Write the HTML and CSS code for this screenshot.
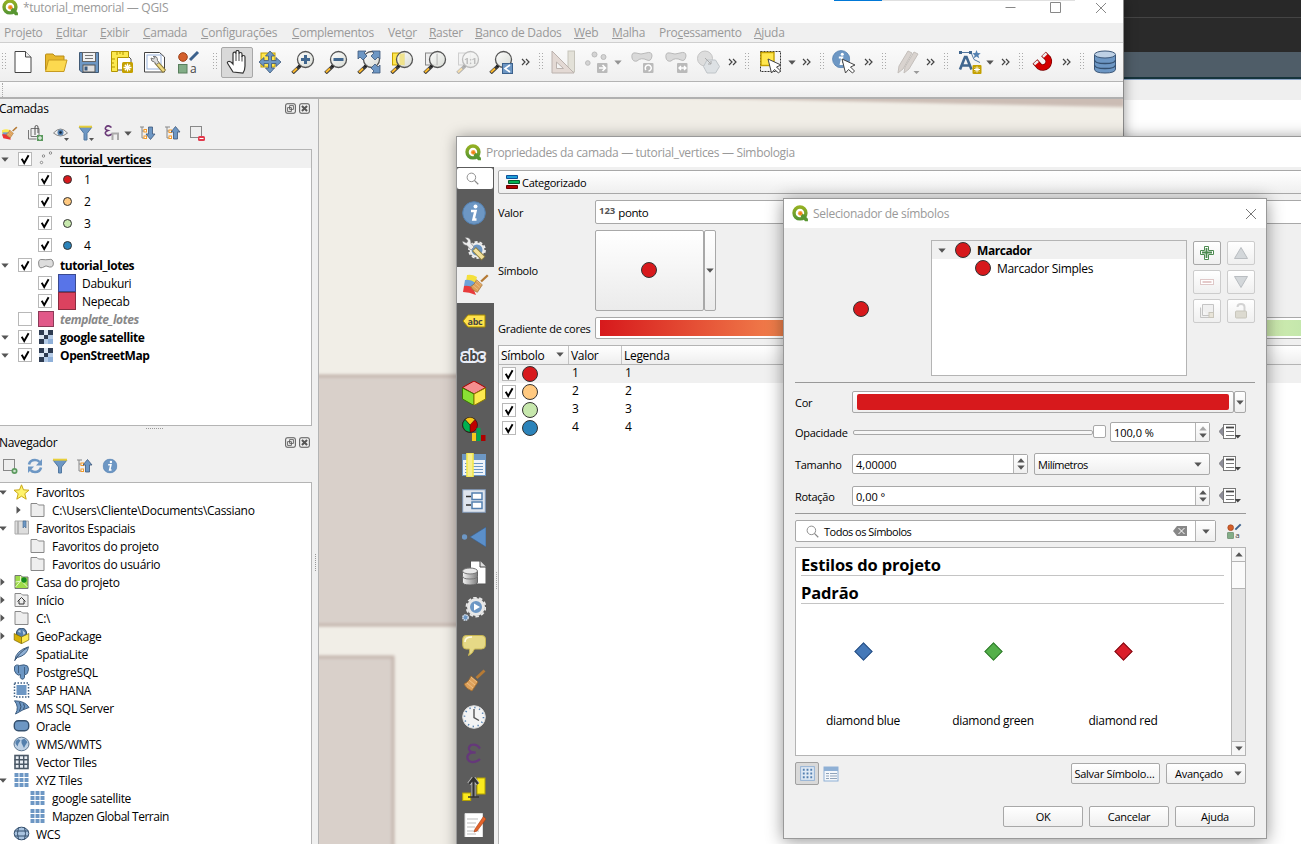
FILE: index.html
```html
<!DOCTYPE html>
<html lang="pt-BR">
<head>
<meta charset="utf-8">
<title>QGIS</title>
<link rel="stylesheet" href="styles.css">
</head>
<body>
<svg class="defs" width="0" height="0">
<defs>
<linearGradient id="gLogo" x1="0" y1="0" x2="0" y2="1"><stop offset="0" stop-color="#93b023"/><stop offset="1" stop-color="#589632"/></linearGradient>
<linearGradient id="gGlass" x1="0" y1="0" x2="1" y2="1"><stop offset="0" stop-color="#fff"/><stop offset="1" stop-color="#d3d7cf"/></linearGradient>
<linearGradient id="gCyl" x1="0" y1="0" x2="1" y2="0"><stop offset="0" stop-color="#f4f4f4"/><stop offset="1" stop-color="#7d7d7d"/></linearGradient>
<symbol id="logo" viewBox="0 0 16 16"><circle cx="7.5" cy="7.5" r="5.6" fill="none" stroke="url(#gLogo)" stroke-width="3.2"/><path d="M8 8l2.6 0.4L15 13v2.4h-2.6L8.4 11z" fill="#589632"/><circle cx="7.8" cy="7.8" r="2.2" fill="#f3a641"/><circle cx="8" cy="8" r="1.2" fill="#ee7913"/></symbol>
<symbol id="down" viewBox="0 0 8 5"><path d="M0.3 0.5h7.4L4 4.7z" fill="#555"/></symbol>
<symbol id="right" viewBox="0 0 5 8"><path d="M0.5 0.3v7.4L4.7 4z" fill="#555"/></symbol>
<symbol id="up" viewBox="0 0 8 5"><path d="M0.3 4.5h7.4L4 0.3z" fill="#555"/></symbol>
<symbol id="more" viewBox="0 0 9 8"><path d="M1 1l3 3-3 3M5 1l3 3-3 3" fill="none" stroke="#444" stroke-width="1.2"/></symbol>
<symbol id="glass" viewBox="0 0 24 24"><path d="M9 16L1.5 23" stroke="#3a3a3a" stroke-width="3.6"/><path d="M6 18.5L2 22.3" stroke="#fcb92c" stroke-width="2"/><circle cx="9" cy="15.5" r="1.6" fill="#111"/><circle cx="14.5" cy="9.5" r="8" fill="url(#gGlass)" fill-opacity=".85" stroke="#555" stroke-width="1.3"/></symbol>
<symbol id="new" viewBox="0 0 24 24"><path d="M4 1.5h10.500l5.500 5.500v15.500H4z" fill="#fff" stroke="#444"/><path d="M14.500 1.500V7H20" fill="#eee" stroke="#444"/></symbol>
<symbol id="open" viewBox="0 0 24 24"><path d="M1.500 20V5q0-1 1-1H9l2 2h9v4" fill="#e8b92c" stroke="#b98d19"/><path d="M1.500 21.500L4.500 10h18.500l-3 11.500z" fill="#fcd94f" stroke="#c79b20"/></symbol>
<symbol id="save" viewBox="0 0 24 24"><path d="M2.500 2.500h19v20H5l-2.500-2.500z" fill="#6d97c4" stroke="#415a75"/><rect x="5.500" y="2.500" width="13" height="9" fill="#f2f2f2" stroke="#666"/><path d="M8 5.500h8M8 8.500h8" stroke="#777"/><rect x="6" y="15" width="12" height="7" fill="#e0e0e0" stroke="#555"/><rect x="7.500" y="16.500" width="3" height="4" fill="#3a5a80"/></symbol>
<symbol id="layout" viewBox="0 0 24 24"><path d="M6 4h10l5 5v11H6z" fill="#fff" stroke="#555"/><path d="M1.500 1.500h17v6h-11v14h-6z" fill="#fce94f" stroke="#b39500"/><path d="M7 2v3M10 2v2M13 2v3M2 9h3M2 13h2M2 17h3" stroke="#b39500"/><rect x="12" y="12" width="11" height="11" rx="1.500" fill="#c4a000"/><path d="M17.500 13.500v8M13.500 17.500h8M14.800 14.800l5.400 5.400M20.200 14.800l-5.400 5.400" stroke="#fff" stroke-width="1.300"/></symbol>
<symbol id="manager" viewBox="0 0 24 24"><path d="M1.500 2.500h15l5 4.500v15h-20z" fill="#fff" stroke="#444"/><rect x="4" y="5" width="14" height="14" fill="none" stroke="#9ab3dc"/><path d="M13 12l8.500 9.500" stroke="#8b7b3c" stroke-width="4.500"/><path d="M14 13l7 8" stroke="#f2dc82" stroke-width="2.500"/><path d="M10 6.500q4.500-1 4.500 4l1.500 2-2.500 2-2-2.500q-3.500 0-3.500-4l2.500 1 1.500-1.500z" fill="#ddd" stroke="#777"/></symbol>
<symbol id="style" viewBox="0 0 24 24"><circle cx="7" cy="7" r="4.300" fill="#d45f2b" stroke="#9c421b"/><path d="M14 10l8-8" stroke="#3c618c" stroke-width="3"/><rect x="2.500" y="14.500" width="8.500" height="8.500" fill="#82ad87" stroke="#587e5c"/><text x="14" y="22.500" font-family="Open Sans" font-size="12" fill="#444">a</text></symbol>
<symbol id="hand" viewBox="0 0 24 24"><path d="M8 22L3 14q-1.500-2 .5-2.500T8 14V4q0-1.800 1.500-1.800T11 4V2q0-1.500 1.500-1.500T14 2v2q0-1.500 1.500-1.500T17 4v3q0-1.500 1.500-1.500T20 7v9q0 4-2 7z" fill="#fff" stroke="#333" stroke-width="1.200"/><path d="M11 4v7M14 4v7M17 6v5.500" stroke="#444"/></symbol>
<symbol id="pan" viewBox="0 0 24 24"><rect x="3" y="3" width="14" height="14" fill="#ffe64d" stroke="#c4a000"/><path d="M12 1l4.500 5h-3v4.500H18V7.500l5 4.500-5 4.500v-3h-4.500V18h3L12 23l-4.500-5h3v-4.500H6v3L1 12l5-4.500v3h4.500V6h-3z" fill="#6d97c4" stroke="#3c5778" stroke-width=".8"/></symbol>
<symbol id="corners" viewBox="0 0 24 24"><path d="M1 1h8L7 3l3 3-4 4-3-3-2 2zM23 1v8l-2-2-3 3-4-4 3-3-2-2zM23 23h-8l2-2-3-3 4-4 3 3 2-2z" fill="#6d97c4" stroke="#3c5778" stroke-width=".8"/></symbol>
<symbol id="blob" viewBox="0 0 24 24"><path d="M2 8q-1-6 4-5 5 2 10 0 6-2 6 3-1 6-5 4-6-3-10 1-4 1-5-3z" fill="#d9d9d9" stroke="#b9b9b9"/></symbol>
<symbol id="brush" viewBox="0 0 24 24"><path d="M22.500 1.500l-8 7.500" stroke="#b57a35" stroke-width="2.800"/><path d="M9 7l7 6-6 9q-6-2-8-7 5-2 7-8z" fill="#dda05a" stroke="#9a682c" stroke-width=".8"/><path d="M9 8l6 5M7 11l6 5M5 14l6 5" stroke="#f1c891" stroke-width=".8"/></symbol>
<symbol id="info" viewBox="0 0 24 24"><circle cx="12" cy="12" r="11.300" fill="#6d97c4" stroke="#5480b0"/><circle cx="13.500" cy="5.500" r="2" fill="#fff"/><path d="M9 10h4.500l-2 8.500h3" fill="none" stroke="#fff" stroke-width="2.600"/></symbol>
<symbol id="cursor" viewBox="0 0 24 24"><path d="M9 9l3.500 14 3-3.500 4 3.500 2-2-4-4 4.500-2z" fill="#fff" stroke="#444"/></symbol>
<symbol id="db" viewBox="0 0 24 24"><path d="M1.500 5v14q0 4 10.500 4t10.500-4V5" fill="#6d97c4" stroke="#3c5778"/><ellipse cx="12" cy="4.500" rx="10.500" ry="3.500" fill="#bed1e5" stroke="#3c5778"/><path d="M1.500 10q0 3.500 10.500 3.500T22.500 10M1.500 15q0 3.500 10.500 3.500T22.500 15" fill="none" stroke="#34506f" stroke-width="1.300"/></symbol>
<symbol id="check" viewBox="0 0 14 14"><rect x=".5" y=".5" width="13" height="13" fill="#fff" stroke="#b8b8b8"/><path d="M3.700 6.800L6.200 11 10.600 3.200" fill="none" stroke="#000" stroke-width="1.900"/></symbol>
<symbol id="uncheck" viewBox="0 0 14 14"><rect x=".5" y=".5" width="13" height="13" fill="#fff" stroke="#b8b8b8"/></symbol>
<symbol id="raster" viewBox="0 0 14 14"><rect width="14" height="14" fill="#b7cde8"/><path d="M0 0h5v5H0zM9 0h5v5H9zM5 5h4v4H5zM0 9h5v5H0z" fill="#2d3b52"/><path d="M5 0h4v5H5zM0 5h5v4H0z" fill="#dce7f4"/><path d="M9 9h5v5H9z" fill="#8fb0d9"/></symbol>
<symbol id="folder" viewBox="0 0 16 16"><path d="M1.500 14.500v-13h6l1.500 1.500h5.500v11.500z" fill="#eee" stroke="#888"/></symbol>
<symbol id="float" viewBox="0 0 12 12"><rect x=".7" y=".7" width="10.600" height="10.600" rx="2" fill="none" stroke="#555" stroke-width="1.100"/><path d="M5 2.800h4.200V7H5zM2.800 5H7v4.200H2.800z" fill="none" stroke="#555" stroke-width=".9"/></symbol>
<symbol id="close" viewBox="0 0 12 12"><rect x=".7" y=".7" width="10.600" height="10.600" rx="2" fill="none" stroke="#555" stroke-width="1.100"/><path d="M3.200 3.200l5.600 5.600M8.800 3.200L3.200 8.800" stroke="#555" stroke-width="2.200"/></symbol>
<symbol id="funnel" viewBox="0 0 16 16"><path d="M1 2h14L9.500 9v6h-3V9z" fill="#6d97c4" stroke="#5278a0"/><path d="M1 1.700h14" stroke="#e8cf3a" stroke-width="2"/></symbol>
<symbol id="expand" viewBox="0 0 16 16"><path d="M0 2h4M2 2v11H4M2 6h2" fill="none" stroke="#888"/><rect x="4" y="4.500" width="2.500" height="2.500" fill="#fff" stroke="#f39a28"/><rect x="4" y="11" width="2.500" height="2.500" fill="#fff" stroke="#f39a28"/><path d="M8.500 2h4v7H15l-4.500 5.500L6 9h2.500z" fill="#6d97c4" stroke="#3c5778" stroke-width=".8"/></symbol>
<symbol id="collapse" viewBox="0 0 16 16"><path d="M0 2h5M2 2v11H4M2 6h2" fill="none" stroke="#888"/><rect x="4" y="5" width="2.500" height="2.500" fill="#fff" stroke="#f39a28"/><rect x="4" y="11" width="2.500" height="2.500" fill="#fff" stroke="#f39a28"/><path d="M8.500 14h4V7H15l-4.500-5.500L6 7h2.500z" fill="#6d97c4" stroke="#3c5778" stroke-width=".8"/></symbol>
<symbol id="grid9" viewBox="0 0 16 16"><path d="M1 1h4v4H1zM6 1h4v4H6zM11 1h4v4h-4zM1 6h4v4H1zM6 6h4v4H6zM11 6h4v4h-4zM1 11h4v4H1zM6 11h4v4H6zM11 11h4v4h-4z" fill="#6d97c4"/></symbol>
<symbol id="globe" viewBox="0 0 16 16"><ellipse cx="8" cy="8" rx="7.500" ry="6.800" fill="#bed1e5" stroke="#5d7690"/><path d="M2 5l3-2 2 1.500-2 3-1 3-2-3zM8 4l3-1.500L14 6l-2 3-1.500 3L9 9l-1-2z" fill="#5580ad"/></symbol>
<symbol id="mag" viewBox="0 0 14 14"><circle cx="5.800" cy="5.800" r="4.600" fill="none" stroke="#888"/><path d="M9 9l4.200 4.200" stroke="#888" stroke-width="1.300"/></symbol>
<symbol id="ovr" viewBox="0 0 24 18"><path d="M5 3v11L0 8.500z" fill="#8d8d99" stroke="#666" stroke-width=".6"/><rect x="4.500" y="1.500" width="12" height="14" fill="#fff" stroke="#777"/><path d="M7 4.500h8" stroke="#444" stroke-width="1.800"/><path d="M7 8.500h8M7 12.500h8" stroke="#777"/><path d="M15.500 12h6.500l-3.200 3.500z" fill="#444"/></symbol>
<symbol id="x" viewBox="0 0 12 12"><path d="M1 1l10 10M11 1L1 11" stroke="#777" fill="none"/></symbol>
<symbol id="dots" viewBox="0 0 4 18"><path d="M.5 0v18M3.500 0v18" stroke="#aaa" stroke-dasharray="1 2"/></symbol>
</defs>
</svg>

<div class="screen">
  <div class="backdrop">
    <div class="bd-top"></div><div class="bd-dark"></div><div class="bd-slate"></div><div class="bd-line"></div><div class="bd-gray"></div>
  </div>

  <div class="win main">
    <div class="titlebar main-title"><svg class="logo"><use href="#logo"/></svg><span class="mt">*tutorial_memorial — QGIS</span>
      <svg class="winbtns" viewBox="0 0 110 14"><path d="M1.500 6.500h10M46.500 1.500h10v10h-10zM92 2l10 10M102 2L92 12" fill="none" stroke="#888"/></svg>
      <i class="progress"></i>
    </div>
    <div class="menubar"><span>Pro<u>j</u>eto</span><span><u>E</u>ditar</span><span><u>E</u>xibir</span><span><u>C</u>amada</span><span><u>C</u>onfigurações</span><span><u>C</u>omplementos</span><span>Vet<u>o</u>r</span><span><u>R</u>aster</span><span><u>B</u>anco de Dados</span><span><u>W</u>eb</span><span><u>M</u>alha</span><span>Pro<u>c</u>essamento</span><span><u>A</u>juda</span></div>
    <div class="toolbar">
      <svg class="h"><use href="#dots"/></svg>
      <svg class="i"><use href="#new"/></svg><svg class="i"><use href="#open"/></svg><svg class="i"><use href="#save"/></svg><svg class="i"><use href="#layout"/></svg><svg class="i"><use href="#manager"/></svg><svg class="i"><use href="#style"/></svg>
      <svg class="h off"><use href="#dots"/></svg>
      <b class="pressed"><svg class="i"><use href="#hand"/></svg></b>
      <svg class="i"><use href="#pan"/></svg>
      <svg class="i" viewBox="0 0 24 24"><use href="#glass"/><path d="M14.500 5v9M10 9.500h9" stroke="#41678f" stroke-width="3"/></svg>
      <svg class="i" viewBox="0 0 24 24"><use href="#glass"/><path d="M9.500 9.500h10" stroke="#41678f" stroke-width="3"/></svg>
      <svg class="i" viewBox="0 0 24 24"><use href="#glass"/><use href="#corners"/></svg>
      <svg class="i" viewBox="0 0 24 24"><rect x="2.500" y="3" width="12" height="12" fill="#ffe64d" stroke="#c4a000"/><use href="#glass"/><path d="M9.500 4v11h5V3.500z" fill="#f0e38c"/></svg>
      <svg class="i" viewBox="0 0 24 24"><rect x="2.500" y="3" width="12" height="12" fill="#eee" stroke="#888"/><use href="#glass"/><path d="M14 4v11" stroke="#bbb"/></svg>
      <svg class="i dim" viewBox="0 0 24 24"><rect x="2.500" y="3" width="12" height="12" fill="#eee" stroke="#888"/><use href="#glass"/><text x="8" y="13.500" font-family="Open Sans" font-weight="bold" font-size="9.500" fill="#555">1:1</text></svg>
      <svg class="i" viewBox="0 0 24 24"><use href="#glass"/><rect x="13.500" y="13.500" width="10" height="10" fill="#6d97c4" stroke="#3c618c"/><path d="M21 15l-5 3.500 5 3.500" fill="none" stroke="#fff" stroke-width="1.600"/></svg>
      <svg class="m"><use href="#more"/></svg><svg class="h"><use href="#dots"/></svg>
      <svg class="i" viewBox="0 0 24 24"><rect x="17" y="1" width="6.500" height="21" fill="#e3e1d8" stroke="#c5c3ba"/><path d="M1 1v22h22zM5.500 12v6.500h7z" fill="#e3d9d4" fill-rule="evenodd" stroke="#bbb2ae"/></svg>
      <svg class="i points" viewBox="0 0 24 24"><g fill="#d4d4d4" stroke="#bbb"><circle cx="2.800" cy="13" r="2.300"/><circle cx="9.500" cy="4.500" r="2.500"/><circle cx="18.500" cy="7" r="2.500"/></g><rect x="12" y="13" width="10.500" height="10" rx="1" fill="#bababa"/><path d="M14 18h6M17.500 15l3 3-3 3" stroke="#fff" stroke-width="1.600" fill="none"/></svg>
      <svg class="a dim2"><use href="#down"/></svg>
      <svg class="i" viewBox="0 0 24 24"><use href="#blob"/><rect x="13" y="13" width="10.500" height="10" rx="1" fill="#bababa"/><path d="M16 20a3 3 0 1 1 2.500 1" stroke="#fff" stroke-width="1.500" fill="none"/></svg>
      <svg class="i" viewBox="0 0 24 24"><use href="#blob"/><rect x="13" y="13" width="10.500" height="10" rx="1" fill="#bababa"/><path d="M15 18h7M17 16l-2 2 2 2M20 16l2 2-2 2" stroke="#fff" stroke-width="1.400" fill="none"/></svg>
      <svg class="i" viewBox="0 0 24 24"><circle cx="9" cy="8.500" r="7.500" fill="#ddd" stroke="#c4c4c4"/><path d="M11 10h8.500l4 6.500-4 6.500H11l-3.500-6.500z" fill="#dde1e4" stroke="#bfc4c8"/><path d="M9 8l6 6v-3M15 14h-3" stroke="#aaa" fill="none"/></svg>
      <svg class="m"><use href="#more"/></svg><svg class="h"><use href="#dots"/></svg>
      <svg class="i" viewBox="0 0 24 24"><rect x="1.500" y="1.500" width="20" height="20" fill="none" stroke="#333" stroke-dasharray="2 1"/><rect x="2" y="2.500" width="13" height="13" fill="#ffe64d" stroke="#c4a000" stroke-width="1.400"/><use href="#cursor"/></svg>
      <svg class="a"><use href="#down"/></svg><svg class="m"><use href="#more"/></svg><svg class="h"><use href="#dots"/></svg>
      <svg class="i" viewBox="0 0 24 24"><g transform="scale(.76)"><use href="#info" width="24" height="24"/></g><use href="#cursor" x="1"/></svg>
      <svg class="m"><use href="#more"/></svg><svg class="h"><use href="#dots"/></svg>
      <svg class="i" viewBox="0 0 24 24"><path d="M2 23l1-7 9-15 4 2-9 16zM8 23l1-6 9-15 4 2-9 15z" fill="#d9d3cf" stroke="#c4bfbb"/><path d="M17.500 21h6L20.500 24z" fill="#999"/></svg>
      <svg class="m"><use href="#more"/></svg><svg class="h"><use href="#dots"/></svg>
      <svg class="i" viewBox="0 0 24 24"><path d="M2 2.500h11l3 7 6 3" fill="none" stroke="#5478a0"/><path d="M1 1h3v3H1zM11 1h3v3h-3z" fill="#41678f"/><path d="M2 19.500L7 7h1.500l5 12.500M4.500 15.500h7" fill="none" stroke="#41678f" stroke-width="2.600"/><path d="M18.500 0l1.200 3 3 .2-2.300 2 .8 3-2.700-1.700L15.800 8.200l.8-3-2.300-2 3-.2z" fill="#5480b0"/><rect x="14.500" y="15" width="9" height="9" rx="1" fill="#c4a000"/><path d="M19 16.500v6M16 19.500h6M17 17.500l4 4M21 17.500l-4 4" stroke="#fff"/></svg>
      <svg class="a"><use href="#down"/></svg><svg class="m"><use href="#more"/></svg><svg class="h"><use href="#dots"/></svg>
      <svg class="i" viewBox="0 0 24 24"><path d="M4 11.500L8.500 16.500A6 6 0 0 0 17 8.500L12.500 4" fill="none" stroke="#7c0000" stroke-width="6.600"/><path d="M4.500 12L8.500 16.500A6 6 0 0 0 17 8.500L13 4.500" fill="none" stroke="#d40000" stroke-width="5.200"/><path d="M4.300 11.800l1.700 1.900M12.800 4.300l1.800 1.800" stroke="#eee" stroke-width="5"/></svg>
      <svg class="m"><use href="#more"/></svg><svg class="h"><use href="#dots"/></svg>
      <svg class="i"><use href="#db"/></svg>
    </div>
    <div class="toolbar2"></div>
    <div class="body">
      <div class="dock">
        <div class="dock-title"><span>Camadas</span><svg><use href="#float"/></svg><svg><use href="#close"/></svg></div>
        <div class="dock-tools first">
          <svg viewBox="0 0 24 24"><path d="M0 8q6-3 12 0v5H0z" fill="#fce94f"/><path d="M1 11h12v5H1z" fill="#729fcf"/><path d="M0 14q6-1 12 2l1 6-11-2z" fill="#e33"/><use href="#brush" x="4" y="2" width="20" height="19"/></svg>
          <svg viewBox="0 0 16 16"><path d="M1.500 5v9h8M4 3.500v8h8v-8z" fill="none" stroke="#777"/><path d="M8 10V2q0-1.500 1.500-1.500T11 2v6" fill="none" stroke="#555"/><rect x="10" y="10" width="6" height="6" fill="#5b9a5e"/><path d="M13 11v4M11 13h4" stroke="#fff"/></svg>
          <svg viewBox="0 0 16 16"><path d="M.5 8q7-8 14 0-7 6-14 0z" fill="#eee" stroke="#888"/><circle cx="7.500" cy="7.500" r="3" fill="#5480b0"/><circle cx="7.500" cy="7.500" r="1.300" fill="#123"/><path d="M11 13h5l-2.500 3z" fill="#555"/></svg>
          <svg viewBox="0 0 16 16"><path d="M1 2h13L9 8.500V15H6V8.500z" fill="#6d97c4" stroke="#5278a0"/><path d="M1 1.700h13" stroke="#e8cf3a" stroke-width="2"/><path d="M11 13h5l-2.500 3z" fill="#555"/></svg>
          <svg viewBox="0 0 16 16"><path d="M7.500 2.500Q4-.5 2 2t2 3.500Q0 7 2 9.500T8 9" fill="none" stroke="#6a3a78" stroke-width="1.600"/><path d="M8.500 15V8.500h5.500V15" fill="none" stroke="#aaa" stroke-width="2"/></svg>
          <svg class="sm"><use href="#down"/></svg>
          <svg><use href="#expand"/></svg><svg><use href="#collapse"/></svg>
          <svg viewBox="0 0 16 16"><rect x="1.500" y="1.500" width="11" height="11" fill="#eee" stroke="#888"/><rect x="9" y="11" width="7" height="5" rx="1.500" fill="#e2394c"/><path d="M10.500 13.500h4" stroke="#fff"/></svg>
        </div>
        <div class="tree layers">
          <div class="row sel"><svg class="ar"><use href="#down"/></svg><svg class="ck"><use href="#check"/></svg><svg class="ty" viewBox="0 0 16 16"><g fill="#fff" stroke="#888"><circle cx="3.500" cy="11.500" r="1.200"/><circle cx="5.500" cy="5" r="1.200"/><circle cx="12.500" cy="2" r="1.200"/></g></svg><span class="b un">tutorial_vertices</span></div>
          <div class="row cat"><svg class="ck"><use href="#check"/></svg><i class="dot red"></i><span>1</span></div>
          <div class="row cat"><svg class="ck"><use href="#check"/></svg><i class="dot org"></i><span>2</span></div>
          <div class="row cat"><svg class="ck"><use href="#check"/></svg><i class="dot grn"></i><span>3</span></div>
          <div class="row cat"><svg class="ck"><use href="#check"/></svg><i class="dot blu"></i><span>4</span></div>
          <div class="row"><svg class="ar"><use href="#down"/></svg><svg class="ck"><use href="#check"/></svg><svg class="ty" viewBox="0 0 16 16"><path d="M.7 7Q0 2 4 2.500t7 0q4-1 4.300 3.500T11.500 10Q8 7.500 4.500 10.500 1 12 .7 7z" fill="#ddd" stroke="#888"/></svg><span class="b">tutorial_lotes</span></div>
          <div class="row sub"><svg class="ck"><use href="#check"/></svg><i class="sw s1"></i><span>Dabukuri</span></div>
          <div class="row sub"><svg class="ck"><use href="#check"/></svg><i class="sw s2"></i><span>Nepecab</span></div>
          <div class="row"><svg class="ar"></svg><svg class="ck"><use href="#uncheck"/></svg><i class="sw s3"></i><span class="b it">template_lotes</span></div>
          <div class="row"><svg class="ar"><use href="#down"/></svg><svg class="ck"><use href="#check"/></svg><svg class="ty ra"><use href="#raster"/></svg><span class="b">google satellite</span></div>
          <div class="row"><svg class="ar"><use href="#down"/></svg><svg class="ck"><use href="#check"/></svg><svg class="ty ra"><use href="#raster"/></svg><span class="b">OpenStreetMap</span></div>
        </div>
        <div class="split"></div>
        <div class="dock-title nav"><span>Navegador</span><svg><use href="#float"/></svg><svg><use href="#close"/></svg></div>
        <div class="dock-tools second">
          <svg viewBox="0 0 16 16"><rect x="1.500" y="1.500" width="11" height="11" fill="#eee" stroke="#888"/><circle cx="12.500" cy="13" r="3" fill="#5b9a5e"/><circle cx="12.500" cy="13" r="1.300" fill="#cfe3cf"/></svg>
          <svg viewBox="0 0 16 16"><path d="M2 6.500Q3 2 8 2q3 0 4.500 2" fill="none" stroke="#6d97c4" stroke-width="2.600"/><path d="M15 1v6.500H9z" fill="#6d97c4"/><path d="M14 9.500Q13 14 8 14q-3 0-4.500-2" fill="none" stroke="#6d97c4" stroke-width="2.600"/><path d="M1 15V8.500h6z" fill="#6d97c4"/></svg>
          <svg><use href="#funnel"/></svg><svg><use href="#collapse"/></svg><svg viewBox="-1 -1 26 26"><use href="#info" width="24" height="24"/></svg>
        </div>
        <div class="tree browser">
          <div class="nrow"><svg class="ar"><use href="#down"/></svg><svg class="ic" viewBox="0 0 16 16"><path d="M8 .8l2 5 5.500.4-4.200 3.500 1.400 5.500L8 12.200l-4.700 3 1.400-5.500L.5 6.200 6 5.800z" fill="#fff36b" stroke="#c9a818"/></svg><span>Favoritos</span></div>
          <div class="nrow in"><svg class="ar rt"><use href="#right"/></svg><svg class="ic"><use href="#folder"/></svg><span>C:\Users\Cliente\Documents\Cassiano</span></div>
          <div class="nrow"><svg class="ar"><use href="#down"/></svg><svg class="ic" viewBox="0 0 16 16"><path d="M1.500 1h3v13h-3zM4.500 1H15v13H4.500z" fill="#ddd" stroke="#aaa"/><path d="M9.500 1h3v7L11 6.500 9.500 8z" fill="#6d97c4" stroke="#41678f" stroke-width=".6"/></svg><span>Favoritos Espaciais</span></div>
          <div class="nrow in"><svg class="ar"></svg><svg class="ic"><use href="#folder"/></svg><span>Favoritos do projeto</span></div>
          <div class="nrow in"><svg class="ar"></svg><svg class="ic"><use href="#folder"/></svg><span>Favoritos do usuário</span></div>
          <div class="nrow"><svg class="ar rt"><use href="#right"/></svg><svg class="ic" viewBox="0 0 16 16"><path d="M1.500 14.500v-13h6L9 3h5.500v11.500z" fill="#9fdc4a" stroke="#777"/><path d="M2 8l6-1 6 6M2 13l5-6V2" stroke="#e6f7c8" fill="none"/><circle cx="10.500" cy="6" r="2.700" fill="#158a1f"/></svg><span>Casa do projeto</span></div>
          <div class="nrow"><svg class="ar rt"><use href="#right"/></svg><svg class="ic" viewBox="0 0 16 16"><use href="#folder"/><path d="M4 9.500L8 5.500 12 9.500M5.500 8.500V12h5V8.500" fill="none" stroke="#333"/></svg><span>Início</span></div>
          <div class="nrow"><svg class="ar rt"><use href="#right"/></svg><svg class="ic"><use href="#folder"/></svg><span>C:\</span></div>
          <div class="nrow"><svg class="ar rt"><use href="#right"/></svg><svg class="ic" viewBox="0 0 16 16"><circle cx="8" cy="5" r="5" fill="#5580ad" stroke="#2c4560"/><path d="M4 3l3-1v3zM9 2l3 3-2 2z" fill="#bed1e5"/><path d="M.7 5.500L8 9v6.700L.7 12z" fill="#d6b106" stroke="#7d6700" stroke-width=".7"/><path d="M15.300 5.500L8 9v6.700l7.300-3.700z" fill="#fce94f" stroke="#7d6700" stroke-width=".7"/></svg><span>GeoPackage</span></div>
          <div class="nrow"><svg class="ar"></svg><svg class="ic" viewBox="0 0 16 16"><path d="M1.500 14Q2 5 15 .8 14 9 4 11.500z" fill="#8fb0d5" stroke="#3f5f82"/><path d="M1 15Q5 7 14 1.500" fill="none" stroke="#35506e"/></svg><span>SpatiaLite</span></div>
          <div class="nrow"><svg class="ar"></svg><svg class="ic" viewBox="0 0 16 16"><path d="M1 3q1-3 5-1.500Q11 0 14 2q2 3 0 7-1 2-3 1.500v3Q10 16 8 15t-1-4.500Q5 12 3 10 0 7 1 3z" fill="#6d97c4" stroke="#3f5f82"/><path d="M5 2v7M11 3v7" stroke="#3f5f82" fill="none"/></svg><span>PostgreSQL</span></div>
          <div class="nrow"><svg class="ar"></svg><svg class="ic" viewBox="0 0 16 16"><rect x="1" y="1" width="14" height="14" fill="none" stroke="#3f5f82" stroke-width="1.500" stroke-dasharray="1.500 1.500"/><rect x="3" y="3" width="10" height="10" fill="#6d97c4"/></svg><span>SAP HANA</span></div>
          <div class="nrow"><svg class="ar"></svg><svg class="ic" viewBox="0 0 16 16"><path d="M1 .8Q12 1 15.500 7.500 10 9 2 14 6 7 1 .8z" fill="#6d97c4" stroke="#3f5f82"/><path d="M6 2q3 5 0 9M10 3.500q2 3 0 6" fill="none" stroke="#35506e"/></svg><span>MS SQL Server</span></div>
          <div class="nrow"><svg class="ar"></svg><svg class="ic" viewBox="0 0 16 16"><rect x=".8" y="2.800" width="14.400" height="10" rx="4" fill="#6d97c4" stroke="#35506e" stroke-width="1.400"/></svg><span>Oracle</span></div>
          <div class="nrow"><svg class="ar"></svg><svg class="ic"><use href="#globe"/></svg><span>WMS/WMTS</span></div>
          <div class="nrow"><svg class="ar"></svg><svg class="ic" viewBox="0 0 16 16"><rect x="1.500" y="1.500" width="13" height="13" fill="#e8edf3" stroke="#4a5866" stroke-width="1.600"/><path d="M5.800 1v14M10.200 1v14M1 5.800h14M1 10.200h14" stroke="#4a5866" stroke-width="1.400"/></svg><span>Vector Tiles</span></div>
          <div class="nrow"><svg class="ar"><use href="#down"/></svg><svg class="ic"><use href="#grid9"/></svg><span>XYZ Tiles</span></div>
          <div class="nrow in"><svg class="ar"></svg><svg class="ic"><use href="#grid9"/></svg><span>google satellite</span></div>
          <div class="nrow in"><svg class="ar"></svg><svg class="ic"><use href="#grid9"/></svg><span class="tight">Mapzen Global Terrain</span></div>
          <div class="nrow"><svg class="ar"></svg><svg class="ic" viewBox="0 0 16 16"><ellipse cx="8" cy="7.500" rx="7.300" ry="6.300" fill="#a9c3df" stroke="#35506e"/><path d="M1 5h14M1 10h14M5 1.500q-2 6 0 12M11 1.500q2 6 0 12" fill="none" stroke="#35506e"/></svg><span>WCS</span></div>
        </div>
        <i class="vdots"></i>
      </div>
      <svg class="map" width="804" height="745" viewBox="0 0 804 745">
        <defs><filter id="soft" x="-10%" y="-10%" width="120%" height="120%"><feGaussianBlur stdDeviation="1.500"/></filter></defs>
        <rect width="804" height="745" fill="#f1eee7"/>
        <g filter="url(#soft)" fill="#d9d0ca" stroke="#c3b4ac" stroke-width="3"><path d="M-10 277H300V526H-10zM-10 558H74V800H-10z"/></g>
        <path d="M250-4H805V8Q560 3 250-4z" fill="#cbbcb4" filter="url(#soft)"/>
      </svg>
    </div>
  </div>

  <div class="win props">
    <div class="titlebar dlg"><svg class="logo"><use href="#logo"/></svg><span class="pt">Propriedades da camada — tutorial_vertices — Simbologia</span></div>
    <div class="props-body">
      <div class="side">
        <div class="find"><svg><use href="#mag"/></svg></div>
        <div class="tab"><svg><use href="#info"/></svg></div>
        <div class="tab"><svg viewBox="0 0 24 24"><circle cx="15" cy="13" r="6.500" fill="#6d97c4" stroke="#eee" stroke-width="2"/><circle cx="15" cy="13" r="8" fill="none" stroke="#eee" stroke-width="1.800" stroke-dasharray="3 2"/><path d="M3 .5q6-1 6 6l3 3.500-3 3-4-4.500Q.5 8 .5 4l4 2L6 4z" fill="#eee" stroke="#777" stroke-width=".6"/><path d="M12 12l9.500 9.500" stroke="#8b7b3c" stroke-width="5.500"/><path d="M12.500 12.500l8.500 8.500" stroke="#f2e09a" stroke-width="3.800"/></svg></div>
        <div class="tab on"><svg class="big" viewBox="0 0 26 26"><path d="M4 3q5-1 10 2l-2 7-9-2z" fill="#f4e03c"/><path d="M2 8q5-1 11 3l-3 6-9-3z" fill="#6da3d9"/><path d="M1 14q5-1 9 2l3 7q-7-3-13-3z" fill="#e83b3b"/><use href="#brush" x="6" y="1" width="20" height="22"/></svg></div>
        <div class="tab"><svg viewBox="0 0 24 24"><path d="M1 12l5-6h17v12H6z" fill="#ffe34d" stroke="#a68a00"/><text x="5.500" y="15.500" font-family="Open Sans" font-weight="bold" font-size="9" fill="#444">abc</text></svg></div>
        <div class="tab"><svg class="wide" viewBox="0 0 28 24"><text x="1.500" y="16" font-family="Open Sans" font-weight="bold" font-size="13.500" fill="#444" stroke="#e9edf7" stroke-width="4" stroke-linejoin="round" paint-order="stroke">abc</text></svg></div>
        <div class="tab"><svg viewBox="0 0 24 24"><path d="M12 0l11.500 6.500L12 13 .5 6.500z" fill="#f58f8f" stroke="#a00" /><path d="M.5 7v11L12 24.500V13z" fill="#8ae234" stroke="#3a7a00"/><path d="M23.500 7v11L12 24.500V13z" fill="#fce94f" stroke="#8a7a00"/></svg></div>
        <div class="tab"><svg viewBox="0 0 24 24"><circle cx="8" cy="8" r="7.500" fill="#c00000" stroke="#111" stroke-width=".6"/><path d="M8 8L3 2.500Q8-2 13 2.500z" fill="#f8c81c" stroke="#111" stroke-width=".5"/><path d="M8 8L3 2.500Q-2 8 3.500 13.800L8 15.500z" fill="#00b050" stroke="#111" stroke-width=".5"/><path d="M10 16h4v8h-4z" fill="#f8c81c"/><path d="M14.500 11h4v13h-4z" fill="#00a651"/><path d="M19 18h4.500v6H19z" fill="#b00000"/></svg></div>
        <div class="tab"><svg viewBox="0 0 24 24"><rect x=".5" y="1.500" width="23" height="21" fill="#eef3fa" stroke="#6d97c4"/><path d="M1 2h22v5H1z" fill="#6d97c4"/><path d="M3 10.500h18M3 13.500h18M3 16.500h18M3 19.500h18" stroke="#6d97c4"/><rect x="5" y="0" width="6" height="24" fill="#f7ef90" stroke="#f4e84e" stroke-width="1.600"/></svg></div>
        <div class="tab"><svg viewBox="0 0 24 24"><rect x=".7" y=".7" width="22.600" height="22.600" fill="#dfe5ee" stroke="#7d94b3"/><path d="M4 7.500h5M4 16h5" stroke="#333" stroke-width="1.500"/><rect x="10" y="4" width="10" height="6.500" fill="#fff" stroke="#5480b0" stroke-width="1.500"/><rect x="10" y="13" width="10" height="6.500" fill="#fff" stroke="#5480b0" stroke-width="1.500"/></svg></div>
        <div class="tab"><svg viewBox="0 0 24 24"><path d="M24 2v20L8 12z" fill="#5b8fc9" stroke="#35608f" stroke-width=".6"/><circle cx="2.500" cy="12" r="2.700" fill="#6d97c4"/></svg></div>
        <div class="tab"><svg viewBox="0 0 24 24"><path d="M8.500 0h10l5.500 5.500V23H8.500z" fill="#fff" stroke="#555"/><path d="M18 0v6h6" fill="#ddd" stroke="#444"/><path d="M.5 10v11q0 3 7.500 3t7.500-3V10" fill="url(#gCyl)" stroke="#666"/><ellipse cx="8" cy="10" rx="7.500" ry="3" fill="#e8e8e8" stroke="#777"/><path d="M.5 15q0 3 7.500 3t7.500-3" fill="none" stroke="#777"/></svg></div>
        <div class="tab"><svg viewBox="0 0 24 24"><circle cx="14" cy="10" r="7.500" fill="#6d97c4" stroke="#e8e8e8" stroke-width="3"/><circle cx="14" cy="10" r="9.500" fill="none" stroke="#e8e8e8" stroke-width="1.800" stroke-dasharray="3.500 2.460"/><path d="M12 6.500v7l6-3.500z" fill="#fff"/><circle cx="3.500" cy="20.500" r="2.700" fill="#6d97c4" stroke="#cfd9e6" stroke-width="1.600" stroke-dasharray="1.600 .6"/></svg></div>
        <div class="tab"><svg viewBox="0 0 24 24"><path d="M4 2.500h16q3.500 0 3.500 3.500v6q0 4-4 4h-7q-2 5-6 6.500 1.500-3 1-6.500H4Q.7 16 .7 12V6Q.7 2.500 4 2.500z" fill="#e6d986" stroke="#c7b552"/><path d="M3 9q0-5 7-5" stroke="#fffbe0" stroke-width="1.600" fill="none"/></svg></div>
        <div class="tab"><svg><use href="#brush"/></svg></div>
        <div class="tab"><svg viewBox="0 0 24 24"><circle cx="12" cy="12" r="11.300" fill="#f4f4f4" stroke="#ddd"/><circle cx="12" cy="12" r="9.500" fill="none" stroke="#5480b0" stroke-width="1.600" stroke-dasharray="1.300 3.670"/><path d="M12 4v8.500l5 3" fill="none" stroke="#555" stroke-width="1.400"/></svg></div>
        <div class="tab"><svg viewBox="0 0 24 24"><path d="M18 7.500Q14.500 2.500 9 4 5 7 8.500 10.500q2 1.500 5 1-6-.5-8 3.500-1 4.500 4 6 5 .5 8.500-3" fill="none" stroke="#65387a" stroke-width="2.300"/></svg></div>
        <div class="tab"><svg viewBox="0 0 24 24"><rect x="15" y="1" width="8" height="16" fill="#fbe91e" stroke="#b3a100"/><rect x=".7" y="16" width="8" height="7.500" fill="#fbe91e" stroke="#b3a100"/><path d="M11.500 20V2M7 7l4.500-6L16 7" fill="none" stroke="#bbb" stroke-width="4"/><path d="M11.500 20V2M7 7l4.500-6L16 7" fill="none" stroke="#333" stroke-width="2.300"/><path d="M6 20h11" stroke="#333" stroke-width="1.500"/></svg></div>
        <div class="tab"><svg viewBox="0 0 24 24"><path d="M3 .5h17.500v24H3z" fill="#fff" stroke="#ddd"/><path d="M5 6h11M5 10h9M5 14h8M5 18h12M5 21h9" stroke="#bbb"/><path d="M13 16l-1 3 3-1 9-12-2.500-2.500z" fill="#e4632a" stroke="#a33c10" stroke-width=".6"/></svg></div>
      </div>
      <div class="panel">
        <div class="combo catg"><svg viewBox="0 0 14 14"><path d="M.5.500h11v3H.500z" fill="#1fa0d8" stroke="#0d4f9a"/><path d="M2.500 5.500h11v3h-11z" fill="#00b050" stroke="#04552a"/><path d="M.5 10.500h11v3H.500z" fill="#b00000" stroke="#600"/></svg><span class="t">Categorizado</span></div>
        <div class="frow valor"><span class="t lab">Valor</span><div class="field"><b class="num">123</b><span class="t2">ponto</span></div></div>
        <div class="frow simb"><span class="t lab">Símbolo</span><div class="symbtn"><i class="mk"></i></div><div class="symarr"><svg><use href="#down"/></svg></div></div>
        <div class="frow grad"><span class="t lab">Gradiente de cores</span><div class="field"><i class="ramp"></i></div></div>
        <div class="table">
          <div class="th"><span>Símbolo</span><svg><use href="#down"/></svg><span class="c2">Valor</span><span class="c3">Legenda</span></div>
          <div class="tr sel"><svg class="ck"><use href="#check"/></svg><i class="mk"></i><span class="n1">1</span><span>1</span></div>
          <div class="tr"><svg class="ck"><use href="#check"/></svg><i class="mk org"></i><span class="n1">2</span><span>2</span></div>
          <div class="tr"><svg class="ck"><use href="#check"/></svg><i class="mk grn"></i><span class="n1">3</span><span>3</span></div>
          <div class="tr"><svg class="ck"><use href="#check"/></svg><i class="mk blu"></i><span class="n1">4</span><span>4</span></div>
        </div>
        <i class="vdots2"></i>
      </div>
    </div>
  </div>

  <div class="win picker">
    <div class="titlebar dlg"><svg class="logo"><use href="#logo"/></svg><span class="st">Selecionador de símbolos</span><svg class="x"><use href="#x"/></svg></div>
    <div class="pk">
      <div class="top">
        <div class="preview"><i class="mk"></i></div>
        <div class="stree"><div class="srow sel"><svg><use href="#down"/></svg><i class="mk"></i><span class="b">Marcador</span></div><div class="srow s2r"><i class="mk"></i><span>Marcador Simples</span></div></div>
        <div class="btns">
          <div class="bt"><svg viewBox="0 0 16 16"><path d="M5.500 1.500h4v4h5v4h-5v5h-4v-5h-4v-4h4z" fill="#fff" stroke="#4c8a50"/><path d="M7.500 3v10M3 7.500h10" stroke="#4c8a50" stroke-width="1.800"/></svg></div>
          <div class="bt off"><svg viewBox="0 0 16 16"><path d="M8 2.500l6.500 11h-13z" fill="#d3d7da" stroke="#b9bdc1"/></svg></div>
          <div class="bt off"><svg viewBox="0 0 16 16"><rect x="1.500" y="5.500" width="13" height="5" fill="#fff" stroke="#dfc8c8"/><path d="M3.500 8h9" stroke="#dcb9b9" stroke-width="1.500"/></svg></div>
          <div class="bt off"><svg viewBox="0 0 16 16"><path d="M8 13.500l6.500-11h-13z" fill="#d3d7da" stroke="#b9bdc1"/></svg></div>
          <div class="bt off"><svg viewBox="0 0 16 16"><path d="M1.500 4.500v10h9M3.500 1.500h11v11h-11z" fill="#f0f0f0" stroke="#c4c4c4"/><rect x="10" y="9.500" width="4.500" height="5" fill="#e8e4d8" stroke="#c9c6bb"/></svg></div>
          <div class="bt off"><svg viewBox="0 0 16 16"><path d="M4.500 4q0-3 3.500-3t3.500 3v4" fill="none" stroke="#d3d3d3" stroke-width="2"/><rect x="2.500" y="8" width="11" height="7" rx="1" fill="#dcdad0" stroke="#c8c6bc"/></svg></div>
        </div>
      </div>
      <div class="sep long"></div>
      <div class="r cor"><span class="t lb">Cor</span><div class="box c1"><i></i></div><div class="box ca"><svg><use href="#down"/></svg></div></div>
      <div class="r opa"><span class="t lb">Opacidade</span><div class="slider"><i class="track"></i><i class="knob"></i></div><div class="spin w1"><span class="t n">100,0 %</span><div class="ud dis"><svg><use href="#up"/></svg><svg><use href="#down"/></svg></div></div><svg class="ovr"><use href="#ovr"/></svg></div>
      <div class="r tam"><span class="t lb">Tamanho</span><div class="spin w2"><span class="t n">4,00000</span><div class="ud"><svg><use href="#up"/></svg><svg><use href="#down"/></svg></div></div><div class="combo mm"><span class="t mmt">Milímetros</span><svg><use href="#down"/></svg></div><svg class="ovr"><use href="#ovr"/></svg></div>
      <div class="r rot"><span class="t lb">Rotação</span><div class="spin w3"><span class="t n">0,00 °</span><div class="ud"><svg><use href="#up"/></svg><svg><use href="#down"/></svg></div></div><svg class="ovr"><use href="#ovr"/></svg></div>
      <div class="sep"></div>
      <div class="r sch"><div class="searchbox"><svg class="mg"><use href="#mag"/></svg><span class="t mmt">Todos os Símbolos</span><svg class="clr" viewBox="0 0 14 10"><path d="M4 0h10v10H4L0 5z" fill="#888"/><path d="M5.500 2l6 6M11.500 2l-6 6" stroke="#fff"/></svg><div class="dd"><svg><use href="#down"/></svg></div></div><svg class="sty"><use href="#style"/></svg></div>
      <div class="gallery">
        <div class="items">
          <h2>Estilos do projeto</h2><h2>Padrão</h2>
          <div class="cells"><div><i class="dm d1"></i><span>diamond blue</span></div><div><i class="dm d2"></i><span>diamond green</span></div><div><i class="dm d3"></i><span>diamond red</span></div></div>
        </div>
        <div class="scroll"><b><svg><use href="#up"/></svg></b><i></i><b class="bot"><svg><use href="#down"/></svg></b></div>
      </div>
      <div class="r foot"><div class="vb"><svg viewBox="0 0 16 16"><rect x=".7" y=".7" width="14.600" height="14.600" fill="#dfe9f4" stroke="#8fb0d5"/><path d="M3 3h2v2H3zM7 3h2v2H7zM11 3h2v2h-2zM3 7h2v2H3zM7 7h2v2H7zM11 7h2v2h-2zM3 11h2v2H3zM7 11h2v2H7zM11 11h2v2h-2z" fill="#5480b0"/></svg></div><svg class="lv" viewBox="0 0 16 16"><rect x="1" y="1" width="14" height="14" fill="#f4f7fb" stroke="#8fb0d5"/><path d="M1 1h14v4H1z" fill="#8fb0d5"/><path d="M3 7.500h3M7 7.500h7M3 10h3M7 10h7M3 12.500h3M7 12.500h7" stroke="#8fa3ba"/></svg><div class="pb sv"><span class="t">Salvar Símbolo…</span></div><div class="pb av"><span class="t">Avançado</span><svg><use href="#down"/></svg></div></div>
      <div class="r ok"><div class="pb"><span class="t">OK</span></div><div class="pb"><span class="t">Cancelar</span></div><div class="pb"><span class="t">Ajuda</span></div></div>
    </div>
  </div>
</div>
</body>
</html>
```
FILE: styles.css
```css
* { box-sizing: border-box; }
body { margin: 0; font-family: "Open Sans", "Noto Sans", sans-serif; font-size: 12px; letter-spacing: -0.3px; color: #000; }
.defs { position: absolute; }
svg { display: block; flex: none; }
i, b { flex: none; display: block; }
span { white-space: pre; }
.screen { position: relative; width: 1301px; height: 844px; overflow: hidden; background: #fff; }
.backdrop { margin-left: 1124px; }
.bd-top { height: 18px; background: #282828; border-bottom: 1px solid #444; }
.bd-dark { height: 34px; background: #2a2a2a; }
.bd-slate { height: 25px; background: #4f5d68; }
.bd-line { height: 3px; background: #8aa3c4; border-top: 2px solid #16343c; }
.bd-gray { height: 20px; background: #efefef; }
.win { position: absolute; background: #f0f0f0; }
.titlebar { background: #fff; color: #999; display: flex; align-items: center; }
.logo { width: 17px; height: 17px; }

.main { left: 0; top: 0; width: 1124px; height: 844px; border-right: 1px solid #8a8a8a; box-shadow: 0 0 12px rgba(0,0,0,.4); }
.main-title { position: relative; height: 23px; padding: 0 9px 8px 2px; }
.mt { margin-left: 4px; }
.winbtns { width: 110px; height: 14px; margin-left: auto; }
.progress { position: absolute; left: 834px; top: 0; width: 241px; height: 1px; background: linear-gradient(90deg, #0078d7 48px, #e0e0e0 48px); }
.menubar { height: 20px; background: #f0f0f0; border-bottom: 1px solid #cfcfcf; display: grid; grid-template-columns: 52px 44px 43px 58px 91px 96px 41px 46px 99px 38px 47px 95px 60px; padding-left: 4px; line-height: 19px; color: #999; }
.toolbar { height: 39px; background: linear-gradient(#fbfbfb, #efefef); border-bottom: 1px solid #b4b4b4; display: grid; align-items: center; justify-items: center; grid-template-columns: 7px 32px 33px 33px 33px 33px 33px 17px 32px 33px 33px 33px 33px 33px 33px 33px 34px 14px 18px 25px 38px 10px 37px 31px 34px 14px 16px 32px 10px 18px 13px 31px 18px 14px 33px 13px 17px 31px 10px 20px 11px 34px 13px 17px 29px; }
.i { width: 24px; height: 24px; }
.h { width: 4px; height: 18px; }
.h.off { margin-left: 5px; }
.m { width: 9px; height: 8px; }
.a { width: 8px; height: 5px; }
.points { justify-self: end; margin-right: 4px; }
.dim { opacity: .35; }
.dim2 { opacity: .6; }
.pressed { width: 32px; height: 31px; background: #d9d9d9; border: 1px solid #a8a8a8; border-radius: 2px; display: grid; place-items: center; }
.toolbar2 { height: 17px; background: linear-gradient(#fbfbfb, #eee); border-bottom: 2px solid #b0b0b0; padding: 1px 0 0 2px; }
.toolbar2::before { content: ""; display: block; width: 1px; height: 14px; border-left: 1px dotted #aaa; }
.body { display: flex; height: 745px; }
.dock { position: relative; width: 319px; border-right: 1px solid #b4b4b4; }
.dock-title { display: flex; height: 19px; align-items: center; padding-right: 8px; }
.dock-title span { margin-right: auto; margin-left: -1px; }
.dock-title svg { width: 11px; height: 11px; margin-left: 3px; }
.dock-tools { display: grid; align-items: center; justify-items: center; }
.dock-tools svg { width: 16px; height: 16px; }
.dock-tools .sm { width: 8px; height: 5px; }
.first { height: 31px; padding-bottom: 1px; grid-template-columns: 20px 30px 22px 28px 23px 10px 30px 20px 28px; }
.tree { width: 312px; border: 1px solid #b4b4b4; border-left: 0; background: #fff; }
.layers { height: 277px; }
.row, .nrow { display: flex; align-items: center; height: 18px; }
.row.sel { background: #f0f0f0; }
.ar { width: 8px; height: 5px; }
.ck { width: 14px; height: 14px; }
.row .ar { margin-left: 1px; }
.row .ck { margin-left: 9px; }
.row .ty, .row .s3 { margin: 0 6px; width: 16px; height: 16px; }
.row .ra { width: 14px; height: 14px; margin: 0 7px; }
.row.cat { height: 22px; padding-left: 29px; }
.row.sub { padding-left: 29px; }
.b { font-weight: bold; letter-spacing: -0.42px; }
.un { text-decoration: underline; text-underline-offset: 2px; }
.it { font-style: italic; color: #888; }
.dot { width: 9px; height: 9px; border-radius: 50%; border: 1px solid #333; margin: 0 12px 0 11px; }
.red, .mk { background: #d7191c; }
.org { background: #ffc980; }
.grn { background: #c7e8ad; }
.blu { background: #2b83ba; }
.sw { width: 18px; height: 18px; margin: 0 6px; }
.s1 { background: #5874e8; border: 1px solid #3a4a90; }
.s2 { background: #db425f; border: 1px solid #8a2c40; }
.s3 { background: #e15989; border: 1px solid #8c3a58; }
.split { margin-left: 146px; width: 17px; border-bottom: 1px dotted #999; height: 3px; margin-bottom: 1px; }
.nav { height: 22px; padding-top: 2px; }
.second { height: 30px; padding-bottom: 3px; grid-template-columns: 20px 30px 20px 30px 20px; }
.browser { height: 366px; }
.nrow .ar { margin-right: 6px; margin-left: -1px; }
.nrow .rt { width: 5px; height: 8px; margin-right: 8px; margin-left: 0; }
.nrow .ic { width: 17px; height: 16px; margin-right: 6px; }
.nrow.in { padding-left: 16px; }
.tight { letter-spacing: -0.48px; }
.vdots { position: absolute; left: 315px; top: 455px; height: 17px; border-left: 1px dotted #999; }

.dlg { height: 30px; }
.props { left: 457px; top: 137px; width: 900px; height: 720px; box-shadow: 0 0 0 1px #999, 0 0 14px rgba(0,0,0,.4); }
.props .dlg { padding-left: 8px; }
.pt { margin-left: 4px; letter-spacing: -0.33px; }
.props-body { display: flex; height: 690px; }
.side { flex: none; width: 37px; background: #5c5c5c; padding-top: 1px; }
.find { width: 36px; height: 21px; background: #fff; border-radius: 2px; padding: 4px 0 0 9px; margin-bottom: 6px; }
.find svg { width: 13px; height: 13px; }
.tab { height: 36px; display: grid; place-items: center; padding-right: 3px; }
.tab svg { width: 24px; height: 24px; }
.tab svg.wide { width: 28px; }
.tab svg.big { width: 26px; height: 26px; }
.tab.on { background: #f0f0f0; padding: 0; }
.panel { flex: 1; min-width: 0; padding: 3px 0 0 4px; position: relative; }
.t { font-size: 11px; letter-spacing: -0.28px; }
.combo { display: flex; align-items: center; border: 1px solid #a8a8a8; border-radius: 2px; background: linear-gradient(#fff, #efefef); }
.catg { height: 24px; padding-left: 7px; }
.catg svg { width: 14px; height: 14px; margin-right: 2px; }
.frow { display: flex; align-items: center; }
.lab { flex: none; width: 97px; }
.field { flex: 1; min-width: 0; border: 1px solid #a8a8a8; border-radius: 2px; background: #fff; display: flex; align-items: center; }
.valor { margin-top: 6px; }
.valor .field { height: 24px; padding-left: 3px; }
.num { font-size: 9.5px; color: #555; margin: -3px 3px 0 0; letter-spacing: 0; }
.t2 { font-size: 11.5px; letter-spacing: -0.4px; }
.simb { margin-top: 6px; }
.symbtn { width: 109px; height: 81px; border: 1px solid #a8a8a8; border-radius: 2px; display: grid; place-items: center; background: linear-gradient(#fff, #ebebeb); }
.symbtn .mk { margin: 0 1px 1px 0; }
.symarr { width: 12px; height: 81px; border: 1px solid #a8a8a8; border-radius: 2px; display: grid; place-items: center; background: linear-gradient(#fff, #ebebeb); }
.symarr svg { width: 8px; height: 5px; }
.mk { width: 16px; height: 16px; border: 1px solid #333; border-radius: 50%; }
.grad { margin-top: 6px; }
.grad .field { height: 22px; padding: 0 4px; }
.ramp { width: 1040px; height: 16px; background: linear-gradient(90deg, #d7191c, #fdae61 25%, #ffffbf 50%, #abdda4 75%, #2b83ba); }
.grad .field { overflow: hidden; }
.table { margin-top: 6px; border: 1px solid #b4b4b4; background: #fff; height: 520px; }
.th { height: 19px; background: linear-gradient(#fff, #eee); border-bottom: 1px solid #b4b4b4; display: flex; padding-left: 2px; line-height: 19px; align-items: stretch; }
.th svg { width: 8px; height: 5px; margin: 6px 4px 0 9px; }
.th .c2 { border-left: 1px solid #c4c4c4; padding-left: 2px; width: 53px; }
.th .c3 { border-left: 1px solid #c4c4c4; padding-left: 2px; }
.th span:first-child { width: 46px; }
.tr { height: 18px; display: flex; align-items: center; }
.tr.sel { background: #f0f0f0; }
.tr .ck { margin: 0 6px 0 3px; }
.tr .mk { margin: 0 34px 0 0; }
.tr .n1 { width: 53px; margin-left: 0; }
.tr span { margin-top: -3px; }
.vdots2 { position: absolute; left: 2px; top: 405px; height: 17px; border-left: 1px dotted #aaa; }
.mk.org { background: #ffc980; } .mk.grn { background: #c7e8ad; } .mk.blu { background: #2b83ba; }

.picker { left: 783px; top: 198px; width: 484px; height: 641px; border: 1px solid #999; box-shadow: 0 2px 16px rgba(0,0,0,.42); }
.picker .dlg { padding: 0 9px 0 8px; height: 29px; }
.st { margin: 0 auto 0 4px; }
.x { width: 12px; height: 12px; }
.pk { padding: 12px 11px 0; }
.top { display: flex; height: 136px; }
.preview { width: 136px; padding: 61px 0 0 58px; }
.stree { width: 256px; height: 136px; border: 1px solid #b4b4b4; background: #fff; margin-right: 6px; }
.srow { height: 18px; display: flex; align-items: center; }
.srow.sel { background: #f0f0f0; }
.srow svg { width: 8px; height: 5px; margin: 0 9px 0 6px; }
.srow .mk { margin-right: 6px; }
.s2r { padding-left: 43px; }
.btns { display: grid; grid-template-columns: 28px 28px; grid-auto-rows: 24px; gap: 5px 6px; padding-top: 1px; align-content: start; }
.bt { border: 1px solid #a8a8a8; border-radius: 2px; background: linear-gradient(#fff, #efefef); display: grid; place-items: center; }
.bt.off { border-color: #ccc; }
.bt svg { width: 16px; height: 16px; }
.sep { height: 1px; background: #999; width: 451px; }
.sep.long { width: 460px; margin-top: 6px; }
.r { display: flex; align-items: center; }
.lb { width: 57px; padding-top: 1px; }
.cor { height: 22px; margin-top: 8px; }
.box { height: 22px; border: 1px solid #a8a8a8; border-radius: 2px; background: linear-gradient(#fff, #efefef); }
.c1 { width: 382px; padding: 2px 4px; }
.c1 i { height: 16px; width: 372px; border-radius: 2px; background: #d7191c; }
.ca { width: 12px; display: grid; place-items: center; }
.ca svg, .ud svg, .combo.mm svg, .dd svg, .scroll svg, .av svg { width: 8px; height: 5px; }
.opa { margin-top: 9px; height: 20px; }
.slider { width: 258px; display: flex; align-items: center; padding-left: 1px; }
.track { width: 240px; height: 5px; border: 1px solid #a8a8a8; border-radius: 2px; background: #f6f6f6; }
.knob { width: 13px; height: 13px; border: 1px solid #a8a8a8; border-radius: 2px; background: #fff; margin-top: -1px; }
.spin { height: 20px; display: flex; align-items: center; border: 1px solid #a8a8a8; border-radius: 2px; background: #fff; }
.n { padding-left: 3px; margin-right: auto; letter-spacing: 0; }
.w1 { width: 100px; } .w2 { width: 176px; } .w3 { width: 358px; }
.ud { width: 14px; align-self: stretch; border-left: 1px solid #b4b4b4; background: linear-gradient(#fff, #efefef); display: grid; justify-items: center; align-content: center; gap: 2px; }
.ud.dis svg:first-child { opacity: .5; }
.ovr { width: 24px; height: 18px; margin-left: 9px; }
.tam { margin-top: 11px; height: 22px; }
.mm { width: 176px; height: 22px; margin-left: 6px; padding: 0 7px 0 3px; justify-content: space-between; }
.mmt { letter-spacing: -0.5px; }
.rot { margin-top: 11px; height: 20px; margin-bottom: 7px; }
.sch { margin-top: 6px; height: 22px; }
.searchbox { width: 421px; height: 22px; border: 1px solid #a8a8a8; border-radius: 2px; background: #fff; display: flex; align-items: center; }
.mg { width: 13px; height: 13px; margin: 0 5px 0 10px; }
.clr { width: 14px; height: 10px; margin-left: auto; margin-right: 8px; }
.dd { width: 20px; align-self: stretch; border-left: 1px solid #b4b4b4; display: grid; place-items: center; background: linear-gradient(#fff, #efefef); }
.sty { width: 16px; height: 16px; margin-left: 10px; }
.gallery { margin-top: 5px; width: 451px; height: 209px; border: 1px solid #b4b4b4; background: #fff; display: flex; }
.items { flex: 1; padding: 0 7px 0 5px; }
h2 { margin: 0; font-size: 16.5px; line-height: 34px; height: 28px; border-bottom: 1px solid #c4c4c4; letter-spacing: -0.15px; }
.cells { display: grid; grid-template-columns: 130px 130px 130px; margin-left: -3px; }
.cells div { display: flex; flex-direction: column; align-items: center; }
.dm { width: 13px; height: 13px; transform: rotate(45deg); margin: 41px 0 54px; }
.d1 { background: #4478b8; border: 1px solid #2c5386; } .d2 { background: #54b04a; border: 1px solid #357d31; } .d3 { background: #db1e2a; border: 1px solid #801119; }
.scroll { width: 14px; border-left: 1px solid #b4b4b4; background: #e4e4e4; display: flex; flex-direction: column; }
.scroll b { height: 14px; display: grid; place-items: center; background: #f6f6f6; border-bottom: 1px solid #b4b4b4; }
.scroll i { height: 27px; background: #fafafa; border-bottom: 1px solid #b4b4b4; }
.scroll .bot { margin-top: auto; border-bottom: 0; border-top: 1px solid #b4b4b4; }
.foot { margin-top: 6px; height: 23px; width: 451px; }
.vb { width: 24px; height: 23px; border: 1px solid #a0a0a0; border-radius: 2px; background: #d9d9d9; display: grid; place-items: center; }
.vb svg { width: 15px; height: 15px; }
.lv { width: 16px; height: 16px; margin-left: 4px; }
.pb { width: 80px; height: 21px; border: 1px solid #a8a8a8; border-radius: 2px; background: linear-gradient(#fff, #efefef); display: flex; align-items: center; justify-content: center; }
.sv { width: 89px; margin-left: auto; margin-right: 6px; padding-right: 2px; }
.av { justify-content: space-between; padding: 0 3px 0 8px; }
.ok { margin-top: 21px; justify-content: flex-end; gap: 6px; }
```
